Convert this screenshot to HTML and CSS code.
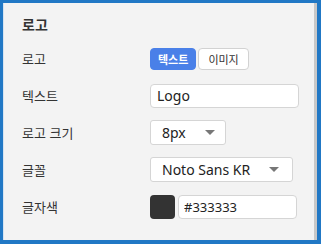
FILE: index.html
```html
<!DOCTYPE html>
<html lang="ko">
<head>
    <meta charset="UTF-8">
    <meta name="viewport" content="width=device-width, initial-scale=1.0">
    <title>로고 설정</title>
    <link rel="stylesheet" href="styles.css">
</head>
<body>
    <div class="frame">
        <div class="panel">
            <div class="panel-title">로고</div>

            <!-- 로고 종류 -->
            <div class="row">
                <div class="label">로고</div>
                <div class="control">
                    <div class="toggle">
                        <button class="toggle-btn active">텍스트</button>
                        <button class="toggle-btn">이미지</button>
                    </div>
                </div>
            </div>

            <div class="row">
                <div class="label">텍스트</div>
                <div class="control">
                    <input class="text-input wide" type="text" value="Logo">
                </div>
            </div>

            <div class="row">
                <div class="label">로고 크기</div>
                <div class="control">
                    <div class="select small">
                        <span>8px</span>
                        <span class="caret"></span>
                    </div>
                </div>
            </div>

            <div class="row">
                <div class="label">글꼴</div>
                <div class="control">
                    <div class="select large">
                        <span>Noto Sans KR</span>
                        <span class="caret"></span>
                    </div>
                </div>
            </div>

            <div class="row">
                <div class="label">글자색</div>
                <div class="control">
                    <div class="swatch"></div>
                    <input class="text-input color" type="text" value="#333333">
                </div>
            </div>
        </div>
    </div>
</body>
</html>
```

FILE: styles.css
```css
* {
    margin: 0;
    padding: 0;
    box-sizing: border-box;
}

body {
    font-family: "Noto Sans", "Noto Sans CJK KR", sans-serif;
    background: #2178c5;
    width: 321px;
    height: 244px;
    overflow: hidden;
}

.frame {
    height: 244px;
    padding: 3px 4px 4px 3px;
}

.panel {
    height: 100%;
    background: #f3f3f3;
    border-left: 1px solid #d6e4f1;
    border-right: 3px solid #c8c8c8;
    padding: 12px 0 0 18px;
}

.panel-title {
    font-size: 14px;
    font-weight: bold;
    color: #333;
    line-height: 20px;
    margin-bottom: 5px;
}

.row {
    display: flex;
    align-items: center;
    height: 37px;
}

.label {
    width: 128px;
    font-size: 13px;
    color: #333;
    font-family: "Noto Sans CJK KR", sans-serif;
}

.control {
    display: flex;
    align-items: center;
    gap: 3px;
}

.toggle {
    display: flex;
    gap: 2px;
}

.toggle-btn {
    height: 22px;
    padding: 0 9px;
    border: 1px solid #d2d2d2;
    border-radius: 4px;
    background: white;
    color: #333;
    font-family: "Noto Sans CJK KR", sans-serif;
    font-size: 11px;
    white-space: nowrap;
}

.toggle-btn.active {
    padding: 0 7px;
    background: #4a80e8;
    border-color: #4a80e8;
    color: white;
    font-weight: bold;
}

.text-input {
    height: 24px;
    border: 1px solid #d5d5d5;
    border-radius: 4px;
    background: white;
    color: #222;
    font-family: "Noto Sans", sans-serif;
    outline: none;
}

.text-input.wide {
    width: 149px;
    padding: 0 6px;
    font-size: 14px;
}

.text-input.color {
    width: 119px;
    padding: 0 5px;
    font-size: 13px;
}

.select {
    height: 25px;
    display: flex;
    align-items: center;
    justify-content: space-between;
    background: white;
    border: 1px solid #d5d5d5;
    border-radius: 3px;
    padding: 0 10px 0 11px;
    font-size: 14px;
    color: #222;
}

.select.small {
    width: 76px;
}

.select.large {
    width: 143px;
    padding-right: 13px;
}

.caret {
    width: 0;
    height: 0;
    border-left: 5px solid transparent;
    border-right: 5px solid transparent;
    border-top: 5px solid #777;
}

.swatch {
    width: 25px;
    height: 24px;
    background: #333333;
    border-radius: 4px;
}
```
